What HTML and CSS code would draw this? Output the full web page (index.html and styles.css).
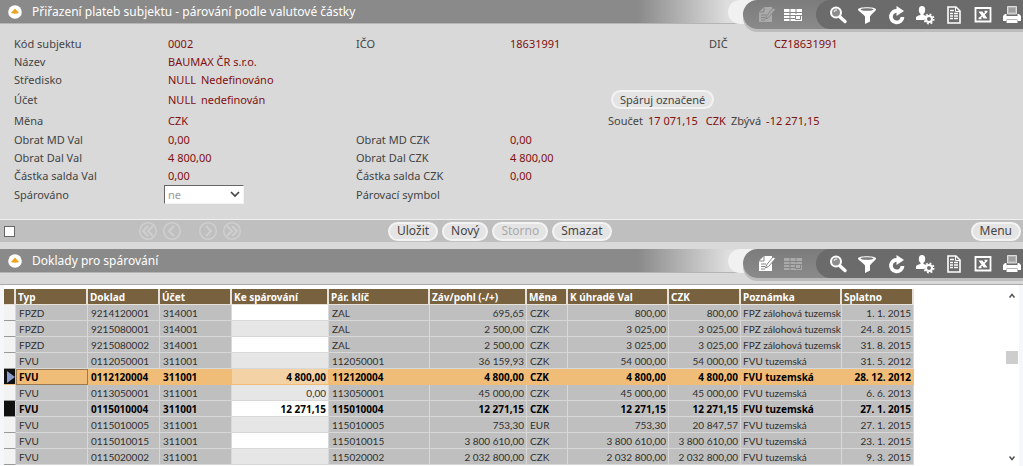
FILE: index.html
```html
<!DOCTYPE html>
<html lang="cs">
<head>
<meta charset="utf-8">
<title>Přiřazení plateb subjektu</title>
<link rel="stylesheet" href="styles.css">
</head>
<body>
<svg class="defs" aria-hidden="true">
  <symbol id="i-edit" viewBox="0 0 20 20"><path d="M7 2h8v15H2V7z" fill="currentColor"/><path d="M2 7h5V2M4 10h5M4 12.500h4M4 15h4" fill="none" stroke="#858585"/><path d="M18.500 4.500L11.500 12.500l-3 1.500 1-3L16 3z" fill="currentColor" stroke="#858585"/></symbol>
  <symbol id="i-grid" viewBox="0 0 20 20"><path d="M1 4h18v12H1z" fill="currentColor"/><path d="M1 7.500h18M1 10.500h18M1 13.500h11M7 4v12M13 4v5" stroke="#858585"/><path d="M12.500 10.500h5v4h-5z" fill="currentColor" stroke="#858585"/></symbol>
  <symbol id="i-search" viewBox="0 0 20 20"><circle cx="8" cy="7.500" r="5" fill="#8d8d8d" stroke="currentColor" stroke-width="2"/><path d="M6 7a2.500 2.500 0 0 1 3-2" fill="none" stroke="currentColor"/><path d="M12 12l5 4.500" stroke="currentColor" stroke-width="3.400" stroke-linecap="round"/></symbol>
  <symbol id="i-filter" viewBox="0 0 20 20"><path d="M1 4.500c0-3 18-3 18 0 0 1.500-5 5-6 7v5l-5 2.500v-7.500C7 9.500 1 6 1 4.500z" fill="currentColor"/><ellipse cx="10" cy="4.500" rx="6.500" ry="1.300" fill="#777"/></symbol>
  <symbol id="i-reload" viewBox="0 0 20 20"><path d="M12 6a5.800 5.800 0 1 0 4.500 6" fill="none" stroke="currentColor" stroke-width="3.800"/><path d="M10.500 1l7.500 5-7.500 5z" fill="currentColor"/></symbol>
  <symbol id="i-user" viewBox="0 0 20 20"><ellipse cx="7" cy="5" rx="3.200" ry="4" fill="currentColor"/><path d="M5.500 8h3v2l3 1-2 4H1v-2.500q0-1.500 4.500-2.500z" fill="currentColor"/><circle cx="14" cy="14" r="3" fill="none" stroke="currentColor" stroke-width="2"/><circle cx="14" cy="14" r="4.600" fill="none" stroke="currentColor" stroke-width="1.800" stroke-dasharray="1.800 1.810"/></symbol>
  <symbol id="i-doc" viewBox="0 0 20 20"><path d="M4 2h8l4 4v12H4z" fill="none" stroke="currentColor" stroke-width="1.600"/><path d="M11.500 2v4.500H16" fill="none" stroke="currentColor"/><path d="M6 5.500h4M6 8.500h3M10 8.500h4M6 11h3M10 11h4M6 13.500h3M10 13.500h4" stroke="currentColor" stroke-width="1.300"/></symbol>
  <symbol id="i-excel" viewBox="0 0 20 20"><path d="M2.500 3h15v13.500h-15z" fill="none" stroke="currentColor" stroke-width="1.800"/><path d="M5.500 6.500h4l5 7h-4z" fill="currentColor"/><path d="M14 6.500l-3 3M9 11l-3 2.500M11.500 6.500h3M5.500 13.500h3" stroke="currentColor" stroke-width="1.500"/></symbol>
  <symbol id="i-print" viewBox="0 0 20 20"><path d="M5.500 1.500h9V9h-9z" fill="#b5b5b5" stroke="#ddd"/><path d="M3 9h1.500v2h11V9H17l2 2v5h-3l-1-2H5l-1 2H1v-5z" fill="currentColor"/><path d="M4.500 14.500h11v3.500h-11z" fill="currentColor"/><path d="M7 4h6M7 6h6" stroke="#888"/></symbol>
  <symbol id="i-up" viewBox="0 0 14 14"><circle cx="7" cy="7" r="6.800" fill="#fff"/><path d="M7 3.500l4 4.500q-4 1.500-8 0z" fill="#efa21c"/></symbol>
  <symbol id="i-next" viewBox="0 0 20 20"><circle cx="10" cy="10" r="8.300" fill="none" stroke="currentColor" stroke-width="1.500"/><path d="M8 5l5 5-5 5" fill="none" stroke="currentColor" stroke-width="2"/></symbol>
  <symbol id="i-last" viewBox="0 0 20 20"><circle cx="10" cy="10" r="8.300" fill="none" stroke="currentColor" stroke-width="1.500"/><path d="M5 5l5 5-5 5M10 5l5 5-5 5" fill="none" stroke="currentColor" stroke-width="2"/></symbol>
</svg>

<section class="panel">
  <header class="bar">
    <button class="collapse" aria-label="Sbalit"><svg><use href="#i-up"/></svg></button>
    <h1 class="title">Přiřazení plateb subjektu - párování podle valutové částky</h1>
    <div class="halo"><div class="tools">
      <div class="tools-edit">
        <button class="tool off" aria-label="Upravit" disabled><svg><use href="#i-edit"/></svg></button>
        <button class="tool" aria-label="Tabulka"><svg><use href="#i-grid"/></svg></button>
      </div>
      <div class="tools-main">
        <button class="tool" aria-label="Hledat"><svg><use href="#i-search"/></svg></button>
        <button class="tool" aria-label="Filtr"><svg><use href="#i-filter"/></svg></button>
        <button class="tool" aria-label="Obnovit"><svg><use href="#i-reload"/></svg></button>
        <button class="tool" aria-label="Uživatel"><svg><use href="#i-user"/></svg></button>
        <button class="tool" aria-label="Sestava"><svg><use href="#i-doc"/></svg></button>
        <button class="tool" aria-label="Excel"><svg><use href="#i-excel"/></svg></button>
        <button class="tool" aria-label="Tisk"><svg><use href="#i-print"/></svg></button>
      </div>
    </div></div>
  </header>

  <div class="form">
    <div class="row"><span>Kód subjektu</span><b>0002</b><span>IČO</span><b>18631991</b><span></span><span>DIČ</span><b>CZ18631991</b></div>
    <div class="row"><span>Název</span><b>BAUMAX ČR s.r.o.</b></div>
    <div class="row"><span>Středisko</span><b class="pair"><i>NULL</i><i>Nedefinováno</i></b></div>
    <div class="row tall"><span>Účet</span><b class="pair"><i>NULL</i><i>nedefinován</i></b><span></span><span></span><span class="action"><button class="pill">Spáruj označené</button></span></div>
    <div class="row tall"><span>Měna</span><b>CZK</b><span></span><span></span><span class="sums"><span>Součet</span><b>17 071,15</b><b class="cur">CZK</b><span>Zbývá</span><b>-12 271,15</b></span></div>
    <div class="row"><span>Obrat MD Val</span><b>0,00</b><span>Obrat MD CZK</span><b>0,00</b></div>
    <div class="row"><span>Obrat Dal Val</span><b>4 800,00</b><span>Obrat Dal CZK</span><b>4 800,00</b></div>
    <div class="row"><span>Částka salda Val</span><b>0,00</b><span>Částka salda CZK</span><b>0,00</b></div>
    <div class="row"><label for="matched">Spárováno</label><span class="pick"><select id="matched"><option>ne</option><option>ano</option></select></span><span>Párovací symbol</span></div>
  </div>

  <div class="footer">
    <input type="checkbox" class="check" aria-label="Označit">
    <nav class="pager">
      <button class="nav back" aria-label="První"><svg><use href="#i-last"/></svg></button>
      <button class="nav back" aria-label="Předchozí"><svg><use href="#i-next"/></svg></button>
      <button class="nav gap" aria-label="Další"><svg><use href="#i-next"/></svg></button>
      <button class="nav" aria-label="Poslední"><svg><use href="#i-last"/></svg></button>
    </nav>
    <div class="actions">
      <button class="pill big">Uložit</button>
      <button class="pill big">Nový</button>
      <button class="pill big" disabled>Storno</button>
      <button class="pill big">Smazat</button>
    </div>
    <button class="pill big menu">Menu</button>
  </div>
</section>

<section class="panel documents">
  <header class="bar">
    <button class="collapse" aria-label="Sbalit"><svg><use href="#i-up"/></svg></button>
    <h2 class="title">Doklady pro spárování</h2>
    <div class="halo"><div class="tools">
      <div class="tools-edit">
        <button class="tool" aria-label="Upravit"><svg><use href="#i-edit"/></svg></button>
        <button class="tool off" aria-label="Tabulka" disabled><svg><use href="#i-grid"/></svg></button>
      </div>
      <div class="tools-main">
        <button class="tool" aria-label="Hledat"><svg><use href="#i-search"/></svg></button>
        <button class="tool" aria-label="Filtr"><svg><use href="#i-filter"/></svg></button>
        <button class="tool" aria-label="Obnovit"><svg><use href="#i-reload"/></svg></button>
        <button class="tool" aria-label="Uživatel"><svg><use href="#i-user"/></svg></button>
        <button class="tool" aria-label="Sestava"><svg><use href="#i-doc"/></svg></button>
        <button class="tool" aria-label="Excel"><svg><use href="#i-excel"/></svg></button>
        <button class="tool" aria-label="Tisk"><svg><use href="#i-print"/></svg></button>
      </div>
    </div></div>
  </header>

  <div class="sheet">
    <table class="grid">
      <colgroup><col class="w-mark"><col class="w-s"><col class="w-s"><col class="w-s"><col class="w-l"><col class="w-xl"><col class="w-l"><col class="w-xs"><col class="w-xl"><col class="w-s"><col class="w-xl"><col class="w-s"></colgroup>
      <thead><tr><th></th><th>Typ</th><th>Doklad</th><th>Účet</th><th>Ke spárování</th><th>Pár. klíč</th><th>Záv/pohl (-/+)</th><th>Měna</th><th>K úhradě Val</th><th>CZK</th><th>Poznámka</th><th>Splatno</th></tr></thead>
      <tbody>
        <tr><td></td><td>FPZD</td><td>9214120001</td><td>314001</td><td><input aria-label="Ke spárování"></td><td>ZAL</td><td class="n">695,65</td><td>CZK</td><td class="n">800,00</td><td class="n">800,00</td><td>FPZ zálohová tuzemská</td><td class="n">1. 1. 2015</td></tr>
        <tr><td></td><td>FPZD</td><td>9215080001</td><td>314001</td><td><input aria-label="Ke spárování"></td><td>ZAL</td><td class="n">2 500,00</td><td>CZK</td><td class="n">3 025,00</td><td class="n">3 025,00</td><td>FPZ zálohová tuzemská</td><td class="n">24. 8. 2015</td></tr>
        <tr><td></td><td>FPZD</td><td>9215080002</td><td>314001</td><td><input aria-label="Ke spárování"></td><td>ZAL</td><td class="n">2 500,00</td><td>CZK</td><td class="n">3 025,00</td><td class="n">3 025,00</td><td>FPZ zálohová tuzemská</td><td class="n">31. 8. 2015</td></tr>
        <tr><td></td><td>FVU</td><td>0112050001</td><td>311001</td><td><input aria-label="Ke spárování"></td><td>112050001</td><td class="n">36 159,93</td><td>CZK</td><td class="n">54 000,00</td><td class="n">54 000,00</td><td>FVU tuzemská</td><td class="n">31. 5. 2012</td></tr>
        <tr class="strong current"><td><svg class="arrow" viewBox="0 0 10 14"><path d="M1 1l8 6-8 6z"/></svg></td><td>FVU</td><td>0112120004</td><td>311001</td><td><input aria-label="Ke spárování" value="4 800,00"></td><td>112120004</td><td class="n">4 800,00</td><td>CZK</td><td class="n">4 800,00</td><td class="n">4 800,00</td><td>FVU tuzemská</td><td class="n">28. 12. 2012</td></tr>
        <tr><td></td><td>FVU</td><td>0113050001</td><td>311001</td><td><input aria-label="Ke spárování" value="0,00"></td><td>113050001</td><td class="n">45 000,00</td><td>CZK</td><td class="n">45 000,00</td><td class="n">45 000,00</td><td>FVU tuzemská</td><td class="n">6. 6. 2013</td></tr>
        <tr class="strong"><td></td><td>FVU</td><td>0115010004</td><td>311001</td><td><input aria-label="Ke spárování" value="12 271,15"></td><td>115010004</td><td class="n">12 271,15</td><td>CZK</td><td class="n">12 271,15</td><td class="n">12 271,15</td><td>FVU tuzemská</td><td class="n">27. 1. 2015</td></tr>
        <tr><td></td><td>FVU</td><td>0115010005</td><td>311001</td><td><input aria-label="Ke spárování"></td><td>115010005</td><td class="n">753,30</td><td>EUR</td><td class="n">753,30</td><td class="n">20 847,57</td><td>FVU tuzemská</td><td class="n">27. 1. 2015</td></tr>
        <tr><td></td><td>FVU</td><td>0115010015</td><td>311001</td><td><input aria-label="Ke spárování"></td><td>115010015</td><td class="n">3 800 610,00</td><td>CZK</td><td class="n">3 800 610,00</td><td class="n">3 800 610,00</td><td>FVU tuzemská</td><td class="n">23. 1. 2015</td></tr>
        <tr><td></td><td>FVU</td><td>0115020002</td><td>311001</td><td><input aria-label="Ke spárování"></td><td>115020002</td><td class="n">2 032 800,00</td><td>CZK</td><td class="n">2 032 800,00</td><td class="n">2 032 800,00</td><td>FVU tuzemská</td><td class="n">9. 3. 2015</td></tr>
      </tbody>
    </table>
    <div class="scroll">
      <svg viewBox="0 0 10 10"><path d="M2.500 6.500l2.500-3 2.500 3"/></svg>
      <div class="track"><div class="thumb"></div></div>
      <svg viewBox="0 0 10 10"><path d="M2.500 3.500l2.500 3 2.500-3"/></svg>
    </div>
  </div>
</section>
</body>
</html>
```

FILE: styles.css
```css
* { box-sizing: border-box; }
body {
  margin: 0;
  background: #d9d9d9;
  color: #444;
  font: 11px/18px "Noto Sans", "Open Sans", sans-serif;
  overflow: hidden;
}
button, input, select { font: inherit; color: inherit; }
button { padding: 0; border: 0; background: none; }
svg { display: block; }
.defs { position: absolute; width: 0; height: 0; }

/* Panel title bar */
.bar {
  display: flex;
  align-items: center;
  height: 24px;
  padding-left: 8px;
  border-bottom: 1px solid #b5b5b5;
  background: linear-gradient(90deg, #8a8a8a calc(100% - 385px), #dedede calc(100% - 295px));
}
.collapse svg { width: 14px; height: 14px; }
.title { margin: 0 0 0 10px; color: #fff; font-size: 12px; font-weight: 400; }
.halo {
  align-self: flex-start;
  height: 24px;
  margin-left: auto;
  padding-left: 15px;
  border-radius: 12px 0 0 12px;
  background: #f1f1f1;
}
.tools {
  display: flex;
  height: 29px;
  border-radius: 15px 0 0 15px;
  background: linear-gradient(#7c7c7c, #8a8a8a);
  box-shadow: 0 3px 0 #bcbcbc;
}
.tools-edit { display: flex; align-items: center; gap: 6px; padding: 0 13px 0 14px; }
.tools-main {
  display: flex;
  align-items: center;
  gap: 9px;
  padding: 0 1px 0 12px;
  border-radius: 15px 0 0 15px;
  background: #6b6b6b;
}
.tool { color: #fff; }
.tool.off { color: #aaa; }
.tool svg { width: 20px; height: 20px; }

/* Record form */
.form { padding: 11px 0 15px 14px; }
.row {
  display: grid;
  grid-template-columns: 154fr 188fr 154fr 98fr 101fr 65fr 249fr;
  align-items: center;
  white-space: nowrap;
}
.row > * { min-width: 0; }
.row.tall { min-height: 21px; }
.row b { color: #7f1010; font-weight: 400; }
.row i { font-style: normal; }
.pair { display: flex; gap: 5px; }
.sums { display: flex; gap: 5px; }
.sums .cur { margin-left: 3px; }
.action { padding-left: 3px; }
.pick { margin-left: -4px; }
.pick select {
  display: block;
  width: 80px;
  height: 19px;
  padding: 0 3px;
  border: 1px solid #f4f4f4;
  border-top-color: #666;
  border-left-color: #666;
  appearance: none;
  color: #999;
  line-height: 16px;
  background: #fff url("data:image/svg+xml,%3Csvg xmlns='http://www.w3.org/2000/svg' width='10' height='7'%3E%3Cpath d='M1 1l4 4 4-4' fill='none' stroke='%23444' stroke-width='1.700'/%3E%3C/svg%3E") no-repeat right 3px center;
}

.pill {
  height: 19px;
  padding: 0 7px;
  border: 2px solid #f3f3f3;
  border-radius: 10px;
  background: #e4e4e4;
  line-height: 14px;
  white-space: nowrap;
}
.pill.big { padding: 0 7px; font-size: 12px; }
.pill:disabled { color: #aaa; }

/* Record footer */
.footer {
  display: flex;
  align-items: center;
  height: 23px;
  padding: 0 2px 0 4px;
  border-top: 1px solid #efefef;
  background: #bfbfbf;
}
.check {
  appearance: none;
  width: 11px;
  height: 11px;
  margin: 0;
  border: 1px solid #666;
  background: #fff;
}
.pager { display: flex; gap: 4px; width: 250px; margin-left: 123px; color: #cfcfcf; }
.nav svg { width: 20px; height: 20px; }
.nav.back { transform: rotate(180deg); }
.nav.gap { margin-left: 12px; }
.actions { display: flex; gap: 4px; }
.menu { margin-left: auto; }

/* Document list */
.documents { margin-top: 7px; }
.sheet {
  display: flex;
  justify-content: space-between;
  margin-top: 11px;
  padding: 4px 4px 1px;
  border-top: 1px solid #aaa;
  background: linear-gradient(90deg, #f6f7fb 4px, #fff 4px, #fff calc(100% - 4px), #f6f7fb calc(100% - 4px));
}
.grid {
  flex: none;
  table-layout: fixed;
  width: 909px;
  border-collapse: separate;
  border-spacing: 0;
  font-size: 10px;
  line-height: 14px;
  color: #303030;
}
.w-mark { width: 12px; }
.w-xs { width: 41px; }
.w-s { width: 72px; }
.w-l { width: 97px; }
.w-xl { width: 101px; }
.grid th {
  height: 16px;
  padding: 0 2px;
  border-right: 2px solid #e6e2da;
  border-bottom: 1px solid #e6e2da;
  background: #78613f;
  color: #fff;
  text-align: left;
  white-space: nowrap;
}
.grid td {
  height: 16px;
  padding: 0 2px 0 3px;
  overflow: hidden;
  border-right: 1px solid #d8d8d8;
  border-bottom: 1px solid #d8d8d8;
  background: #bfbfbf;
  font-family: Lato, "Noto Sans", sans-serif;
  white-space: nowrap;
}
.grid td:first-child { padding: 0; border-bottom-color: #999; background: #f3f3f3; }
.grid td.n { text-align: right; }
.grid td:nth-child(5) { padding: 0; background: #fff; }
.grid tr:nth-child(even) td:nth-child(5) { background: #e6e6e6; }
.grid td:nth-child(11) { padding: 0 0 0 2px; }
.grid input {
  display: block;
  width: 100%;
  height: 15px;
  padding: 0 2px;
  border: 0;
  background: none;
  text-align: right;
}
.grid .strong td { color: #000; font-family: "Noto Sans", sans-serif; font-weight: 700; }
.grid .strong td:first-child { background: #111; }
.grid .current td { border-color: #f0bd78; background: #f0bd78; }
.grid .current td:nth-child(2) { outline: 1px solid #9a7a50; outline-offset: -1px; }
.grid .current td:nth-child(5) { background: #f3d2a6; }
.arrow { width: 10px; height: 14px; margin-left: 2px; fill: #8b9bcb; }

.scroll {
  display: flex;
  flex-direction: column;
  align-items: center;
  width: 14px;
  background: #fff;
}
.scroll svg { width: 10px; height: 14px; fill: none; stroke: #555; stroke-width: 1.5; }
.track { flex: 1; width: 12px; padding-top: 48px; }
.thumb { height: 13px; background: #cdcdcd; }
```
